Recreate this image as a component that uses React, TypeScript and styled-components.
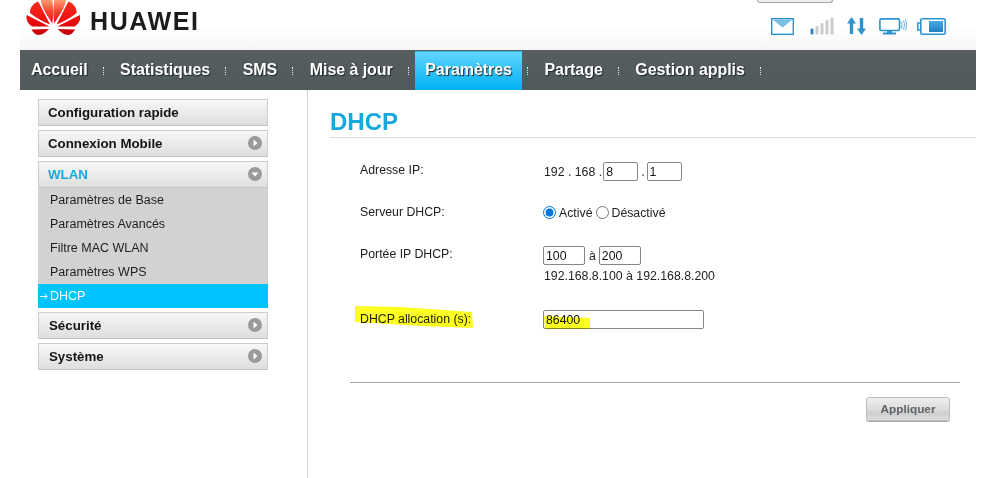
import React from 'react';
import styled, { createGlobalStyle } from 'styled-components';

const GlobalStyle = createGlobalStyle`
  html, body {
    margin: 0;
    background: #fff;
    height: 478px;
    overflow: hidden;
    font-family: "Liberation Sans", Arial, sans-serif;
  }
`;

const Page = styled.div`
  width: 956px;
  height: 478px;
  margin-left: 20px;
  display: flex;
  flex-direction: column;
`;

const Header = styled.header`
  height: 50px;
  flex: none;
  display: flex;
  justify-content: space-between;
  background: linear-gradient(#ffffff, #ffffff 50%, #f6f6f6);
`;

const Brand = styled.div`
  display: flex;
  align-items: flex-start;
  padding-left: 6px;
`;

const BrandName = styled.span`
  margin: 7px 0 0 10px;
  font-size: 25px;
  line-height: 28px;
  font-weight: 700;
  letter-spacing: 1.6px;
  color: #1c1c1c;
`;

const HeaderRight = styled.div`
  display: flex;
  flex-direction: column;
  align-items: flex-end;
`;

const LogoutEdge = styled.div`
  width: 74px;
  height: 2px;
  margin-right: 143px;
  background: #eee;
  border: 1px solid #a5a3ad;
  border-top: 0;
  border-radius: 0 0 3px 3px;
`;

const StatusIcons = styled.div`
  display: flex;
  align-items: center;
  gap: 13px;
  margin: 14px 30px 0 0;
  & > svg:first-child {
    margin-right: 3px;
  }
  & > svg:last-child {
    margin-left: -3px;
  }
`;

const Nav = styled.nav`
  height: 40px;
  flex: none;
  display: flex;
  align-items: stretch;
  padding-left: 1px;
  background: linear-gradient(#565e60, #50595b);
`;

const NavItem = styled.a<{ $active?: boolean }>`
  display: flex;
  align-items: center;
  padding: 0 10px;
  font-size: 16px;
  font-weight: 700;
  letter-spacing: -0.05px;
  color: #fff;
  text-shadow: 1px 1px 1px #20282a;
  ${(p) =>
    p.$active &&
    `
    margin-top: 1px;
    padding-bottom: 2px;
    background: linear-gradient(#62d6ff, #2cc0f8 55%, #00b3f4);
    border-top: 1px solid #3ab5e0;
    box-sizing: border-box;
  `}
`;

const NavDots = styled.i`
  width: 0;
  height: 8px;
  align-self: center;
  margin: 1px 6.5px 0 5px;
  border-left: 1px dotted #e6e9ea;
`;

const Body = styled.div`
  flex: 1;
  display: flex;
  min-height: 0;
`;

const Sidebar = styled.aside`
  width: 230px;
  flex: none;
  margin: 9px 0 0 18px;
  display: flex;
  flex-direction: column;
  gap: 4px;
`;

const SideHead = styled.div<{ $open?: boolean; $nudge?: boolean }>`
  height: 27px;
  box-sizing: border-box;
  display: flex;
  align-items: center;
  justify-content: space-between;
  padding: 0 5px 1px ${(p) => (p.$nudge ? 10 : 9)}px;
  font-size: 13.3px;
  font-weight: 700;
  color: ${(p) => (p.$open ? '#19a9dc' : '#141414')};
  background: linear-gradient(#f7f7f7, #dedede);
  border: 1px solid #cdcdcd;
  border-bottom-color: #c4c4c4;
`;

const SideGroup = styled.div`
  display: flex;
  flex-direction: column;
`;

const SubList = styled.div`
  background: #d2d2d2;
  display: flex;
  flex-direction: column;
`;

const SubItem = styled.a<{ $active?: boolean }>`
  height: 24px;
  display: flex;
  align-items: center;
  padding-left: ${(p) => (p.$active ? 2 : 12)}px;
  font-size: 12.5px;
  color: ${(p) => (p.$active ? '#fff' : '#1e1e1e')};
  background: ${(p) => (p.$active ? '#00c3ff' : 'transparent')};
`;

const SubArrow = styled.svg`
  width: 8px;
  height: 7px;
  margin-right: 2px;
`;

const Main = styled.main`
  margin-left: 39px;
  flex: 1;
  border-left: 1px solid #d0d0d0;
  padding-left: 22px;
  display: flex;
  flex-direction: column;
`;

const Title = styled.h1`
  margin: 17px 0 0;
  height: 30px;
  font-size: 24px;
  line-height: 29px;
  font-weight: 700;
  color: #15a8dd;
  border-bottom: 1px solid #dcdcdc;
`;

const Form = styled.form`
  margin: 24px 16px 0 -1px;
  padding-left: 21px;
  display: flex;
  flex-direction: column;
`;

const Row = styled.div<{ $gap: number }>`
  display: grid;
  grid-template-columns: 183px 1fr;
  margin-left: 10px;
  margin-bottom: ${(p) => p.$gap}px;
  font-size: 12.3px;
  color: #222;
`;

const Label = styled.label<{ $low?: boolean }>`
  position: relative;
  padding-top: ${(p) => (p.$low ? 2 : 1)}px;
  line-height: 15px;
`;

const Values = styled.div`
  position: relative;
  display: flex;
  align-items: center;
  height: 19px;
`;

const PlainText = styled.span`
  margin-left: 1px;
  padding-top: 1px;
`;

const FieldInput = styled.input<{ $w: number }>`
  width: ${(p) => p.$w}px;
  height: 19px;
  box-sizing: border-box;
  padding: 0 2px;
  border: 1px solid #85858c;
  border-radius: 2px;
  background: transparent;
  font: 12.3px "Liberation Sans", Arial, sans-serif;
  color: #111;
  outline: none;
`;

const Sep = styled.span<{ $l: number; $r: number }>`
  margin: 0 ${(p) => p.$r}px 0 ${(p) => p.$l}px;
`;

const Radio = styled.input`
  width: 13px;
  height: 13px;
  margin: 0 3px 0 0;
  accent-color: #0075db;
`;

const RadioLine = styled(Values)`
  margin-top: -1px;
`;

const RadioText = styled.span`
  margin-right: 3px;
`;

const RangeHint = styled.div`
  margin: 4px 0 0 1px;
  line-height: 15px;
  grid-column: 2;
`;

const Marker = styled.svg`
  position: absolute;
  pointer-events: none;
  mix-blend-mode: multiply;
  overflow: visible;
`;

const LabelMarker = styled(Marker)`
  left: -5px;
  top: -5px;
`;

const ValueMarker = styled(Marker)`
  left: 0;
  top: 5px;
`;

const Divider = styled.hr`
  margin: 1px 0 0;
  border: 0;
  border-top: 1px solid #a6a6a6;
`;

const Actions = styled.div`
  display: flex;
  justify-content: flex-end;
  padding: 14px 10px 0 0;
`;

const ApplyButton = styled.button`
  width: 84px;
  height: 24px;
  border: 1px solid #bcbcbc;
  border-radius: 3px;
  background: linear-gradient(#efefef, #dcdcdc 50%, #cfcfcf 70%, #dedede);
  box-shadow: 0 1px 0 #aaa;
  font: 700 11.8px "Liberation Sans", Arial, sans-serif;
  color: #5f6468;
`;

const Chevron = ({ down }: { down?: boolean }) => (
  <svg width="14" height="14" viewBox="0 0 14 14">
    <circle cx="7" cy="7" r="7" fill="#9a9a9a" />
    <path d={down ? 'M3.5 5.5h7L7 9.5z' : 'M5.5 3.5v7L9.5 7z'} fill="#fff" />
  </svg>
);

const PetalSide = () => (
  <>
    <path d="M26.3 23.5C22 16 15.5 8 14.7 0L26.3 0C27.5 8 27.5 16 26.3 23.5Z" fill="url(#petalInner)" />
    <path d="M24 24.5L12.3 1.5C7.5 3 3.5 8 4 13C10 18 17 21.5 24 24.5Z" fill="url(#petal)" />
    <path d="M23.3 26.5L0.8 15C-0.5 20 2 24 6 26.5Z" fill="url(#petal)" />
    <path d="M5.5 29.5L23 29C20 32 16 35 12.5 35C9.5 35 7 32 5.5 29.5Z" fill="url(#petal)" />
  </>
);

const Logo = () => (
  <svg width="54" height="37" viewBox="0 0 54 37">
    <defs>
      <linearGradient id="petal" gradientUnits="userSpaceOnUse" x1="0" y1="0" x2="0" y2="36">
        <stop offset="0" stopColor="#f5331f" />
        <stop offset="0.55" stopColor="#ef0f10" />
        <stop offset="1" stopColor="#bc0007" />
      </linearGradient>
      <linearGradient id="petalInner" gradientUnits="userSpaceOnUse" x1="0" y1="0" x2="0" y2="24">
        <stop offset="0" stopColor="#ff9a72" />
        <stop offset="0.5" stopColor="#f8402c" />
        <stop offset="1" stopColor="#e0100f" />
      </linearGradient>
    </defs>
    <PetalSide />
    <g transform="translate(54.6 0) scale(-1 1)">
      <PetalSide />
    </g>
  </svg>
);

const blue = '#2e92cf';

const MailIcon = () => (
  <svg width="23" height="17" viewBox="0 0 23 17">
    <rect x="0.7" y="0.7" width="21.6" height="15.6" fill="#fff" stroke={blue} strokeWidth="1.4" />
    <path d="M1.5 1.5h20L11.5 10z" fill="#7cc0ea" />
    <path d="M2 3l9.5 7.5L21 3" fill="none" stroke="#fff" strokeWidth="1.2" />
  </svg>
);

const SignalIcon = () => (
  <svg width="24" height="18" viewBox="0 0 24 18">
    <rect x="0.5" y="11.5" width="3" height="6" rx="1.2" fill="#3d86b5" />
    {[
      [5.5, 9],
      [10.5, 6],
      [15.5, 3],
      [20.5, 0.5],
    ].map(([x, y]) => (
      <rect key={x} x={x} y={y} width="3" height={17.5 - y} rx="1.2" fill="#cbcbcb" />
    ))}
  </svg>
);

const ArrowsIcon = () => (
  <svg width="19" height="18" viewBox="0 0 19 18">
    <path d="M4.5 0l4.5 6.5H6.2V17H2.8V6.5H0z M14.5 18l4.5-6.5h-2.8V1h-3.4v10.5H10z" fill={blue} />
  </svg>
);

const ScreenIcon = () => (
  <svg width="28" height="17" viewBox="0 0 28 17">
    <rect x="0.9" y="0.9" width="19.6" height="11.6" rx="1.5" fill="#fff" stroke={blue} strokeWidth="1.6" />
    <path d="M8 13h5v1.6h4V16.5H4v-1.9h4z" fill={blue} />
    <path
      d="M22 3.5q2 3.5 0 7M24 2.5q3 4.5 0 9M26 1.5q3.5 5.500 0 11"
      fill="none"
      stroke="#7cb8de"
      strokeWidth="1.1"
    />
  </svg>
);

const BatteryIcon = () => (
  <svg width="29" height="17" viewBox="0 0 29 17">
    <defs>
      <linearGradient id="cell" x1="0" y1="0" x2="0" y2="1">
        <stop offset="0" stopColor="#4aa8e4" />
        <stop offset="1" stopColor="#1f80c4" />
      </linearGradient>
    </defs>
    <path d="M3.500 5H0.800v7H3.500" fill="none" stroke={blue} strokeWidth="1.5" />
    <rect x="3.800" y="0.800" width="24.400" height="15.400" rx="1.500" fill="#fff" stroke={blue} strokeWidth="1.600" />
    <rect x="12" y="3" width="14" height="11" fill="url(#cell)" />
  </svg>
);

const subItems = ['Paramètres de Base', 'Paramètres Avancés', 'Filtre MAC WLAN', 'Paramètres WPS'];

const navItems = ['Accueil', 'Statistiques', 'SMS', 'Mise à jour', 'Paramètres', 'Partage', 'Gestion applis'];

export default function App() {
  return (
    <Page>
      <GlobalStyle />
      <Header>
        <Brand>
          <Logo />
          <BrandName>HUAWEI</BrandName>
        </Brand>
        <HeaderRight>
          <LogoutEdge />
          <StatusIcons>
            <MailIcon />
            <SignalIcon />
            <ArrowsIcon />
            <ScreenIcon />
            <BatteryIcon />
          </StatusIcons>
        </HeaderRight>
      </Header>
      <Nav>
        {navItems.map((item) => (
          <React.Fragment key={item}>
            <NavItem $active={item === 'Paramètres'}>{item}</NavItem>
            <NavDots />
          </React.Fragment>
        ))}
      </Nav>
      <Body>
        <Sidebar>
          <SideHead>Configuration rapide</SideHead>
          <SideHead>
            Connexion Mobile
            <Chevron />
          </SideHead>
          <SideGroup>
            <SideHead $open>
              WLAN
              <Chevron down />
            </SideHead>
            <SubList>
              {subItems.map((item) => (
                <SubItem key={item}>{item}</SubItem>
              ))}
              <SubItem $active>
                <SubArrow viewBox="0 0 8 7">
                  <path d="M0 3.500H7M4.500 0.800L7.300 3.500L4.500 6.200" fill="none" stroke="#fff" strokeWidth="0.9" />
                </SubArrow>
                DHCP
              </SubItem>
            </SubList>
          </SideGroup>
          <SideHead $nudge>
            Sécurité
            <Chevron />
          </SideHead>
          <SideHead $nudge>
            Système
            <Chevron />
          </SideHead>
        </Sidebar>
        <Main>
          <Title>DHCP</Title>
          <Form>
            <Row $gap={23}>
              <Label>Adresse IP:</Label>
              <Values>
                <PlainText>192 . 168 .</PlainText>
                <Sep $l={1} $r={0} />
                <FieldInput $w={35} defaultValue="8" />
                <Sep $l={3} $r={2}>
                  .
                </Sep>
                <FieldInput $w={35} defaultValue="1" />
              </Values>
            </Row>
            <Row $gap={24}>
              <Label>Serveur DHCP:</Label>
              <RadioLine>
                <Radio type="radio" name="dhcp" defaultChecked />
                <RadioText>Activé</RadioText>
                <Radio type="radio" name="dhcp" />
                <span>Désactivé</span>
              </RadioLine>
            </Row>
            <Row $gap={26}>
              <Label>Portée IP DHCP:</Label>
              <Values>
                <FieldInput $w={42} defaultValue="100" />
                <Sep $l={4} $r={3}>
                  à
                </Sep>
                <FieldInput $w={42} defaultValue="200" />
              </Values>
              <RangeHint>192.168.8.100 à 192.168.8.200</RangeHint>
            </Row>
            <Row $gap={52}>
              <Label $low>
                <LabelMarker width="118" height="24" viewBox="0 0 118 24">
                  <path d="M0 1L46 2L117 7L118 23L66 21L0 17Z" fill="#fdff1f" />
                </LabelMarker>
                DHCP allocation (s):
              </Label>
              <Values>
                <FieldInput $w={161} defaultValue="86400" />
                <ValueMarker width="48" height="14" viewBox="0 0 48 14">
                  <path d="M1 1L47 3V14H2Z" fill="#fdff1f" />
                </ValueMarker>
              </Values>
            </Row>
            <Divider />
            <Actions>
              <ApplyButton type="button">Appliquer</ApplyButton>
            </Actions>
          </Form>
        </Main>
      </Body>
    </Page>
  );
}
